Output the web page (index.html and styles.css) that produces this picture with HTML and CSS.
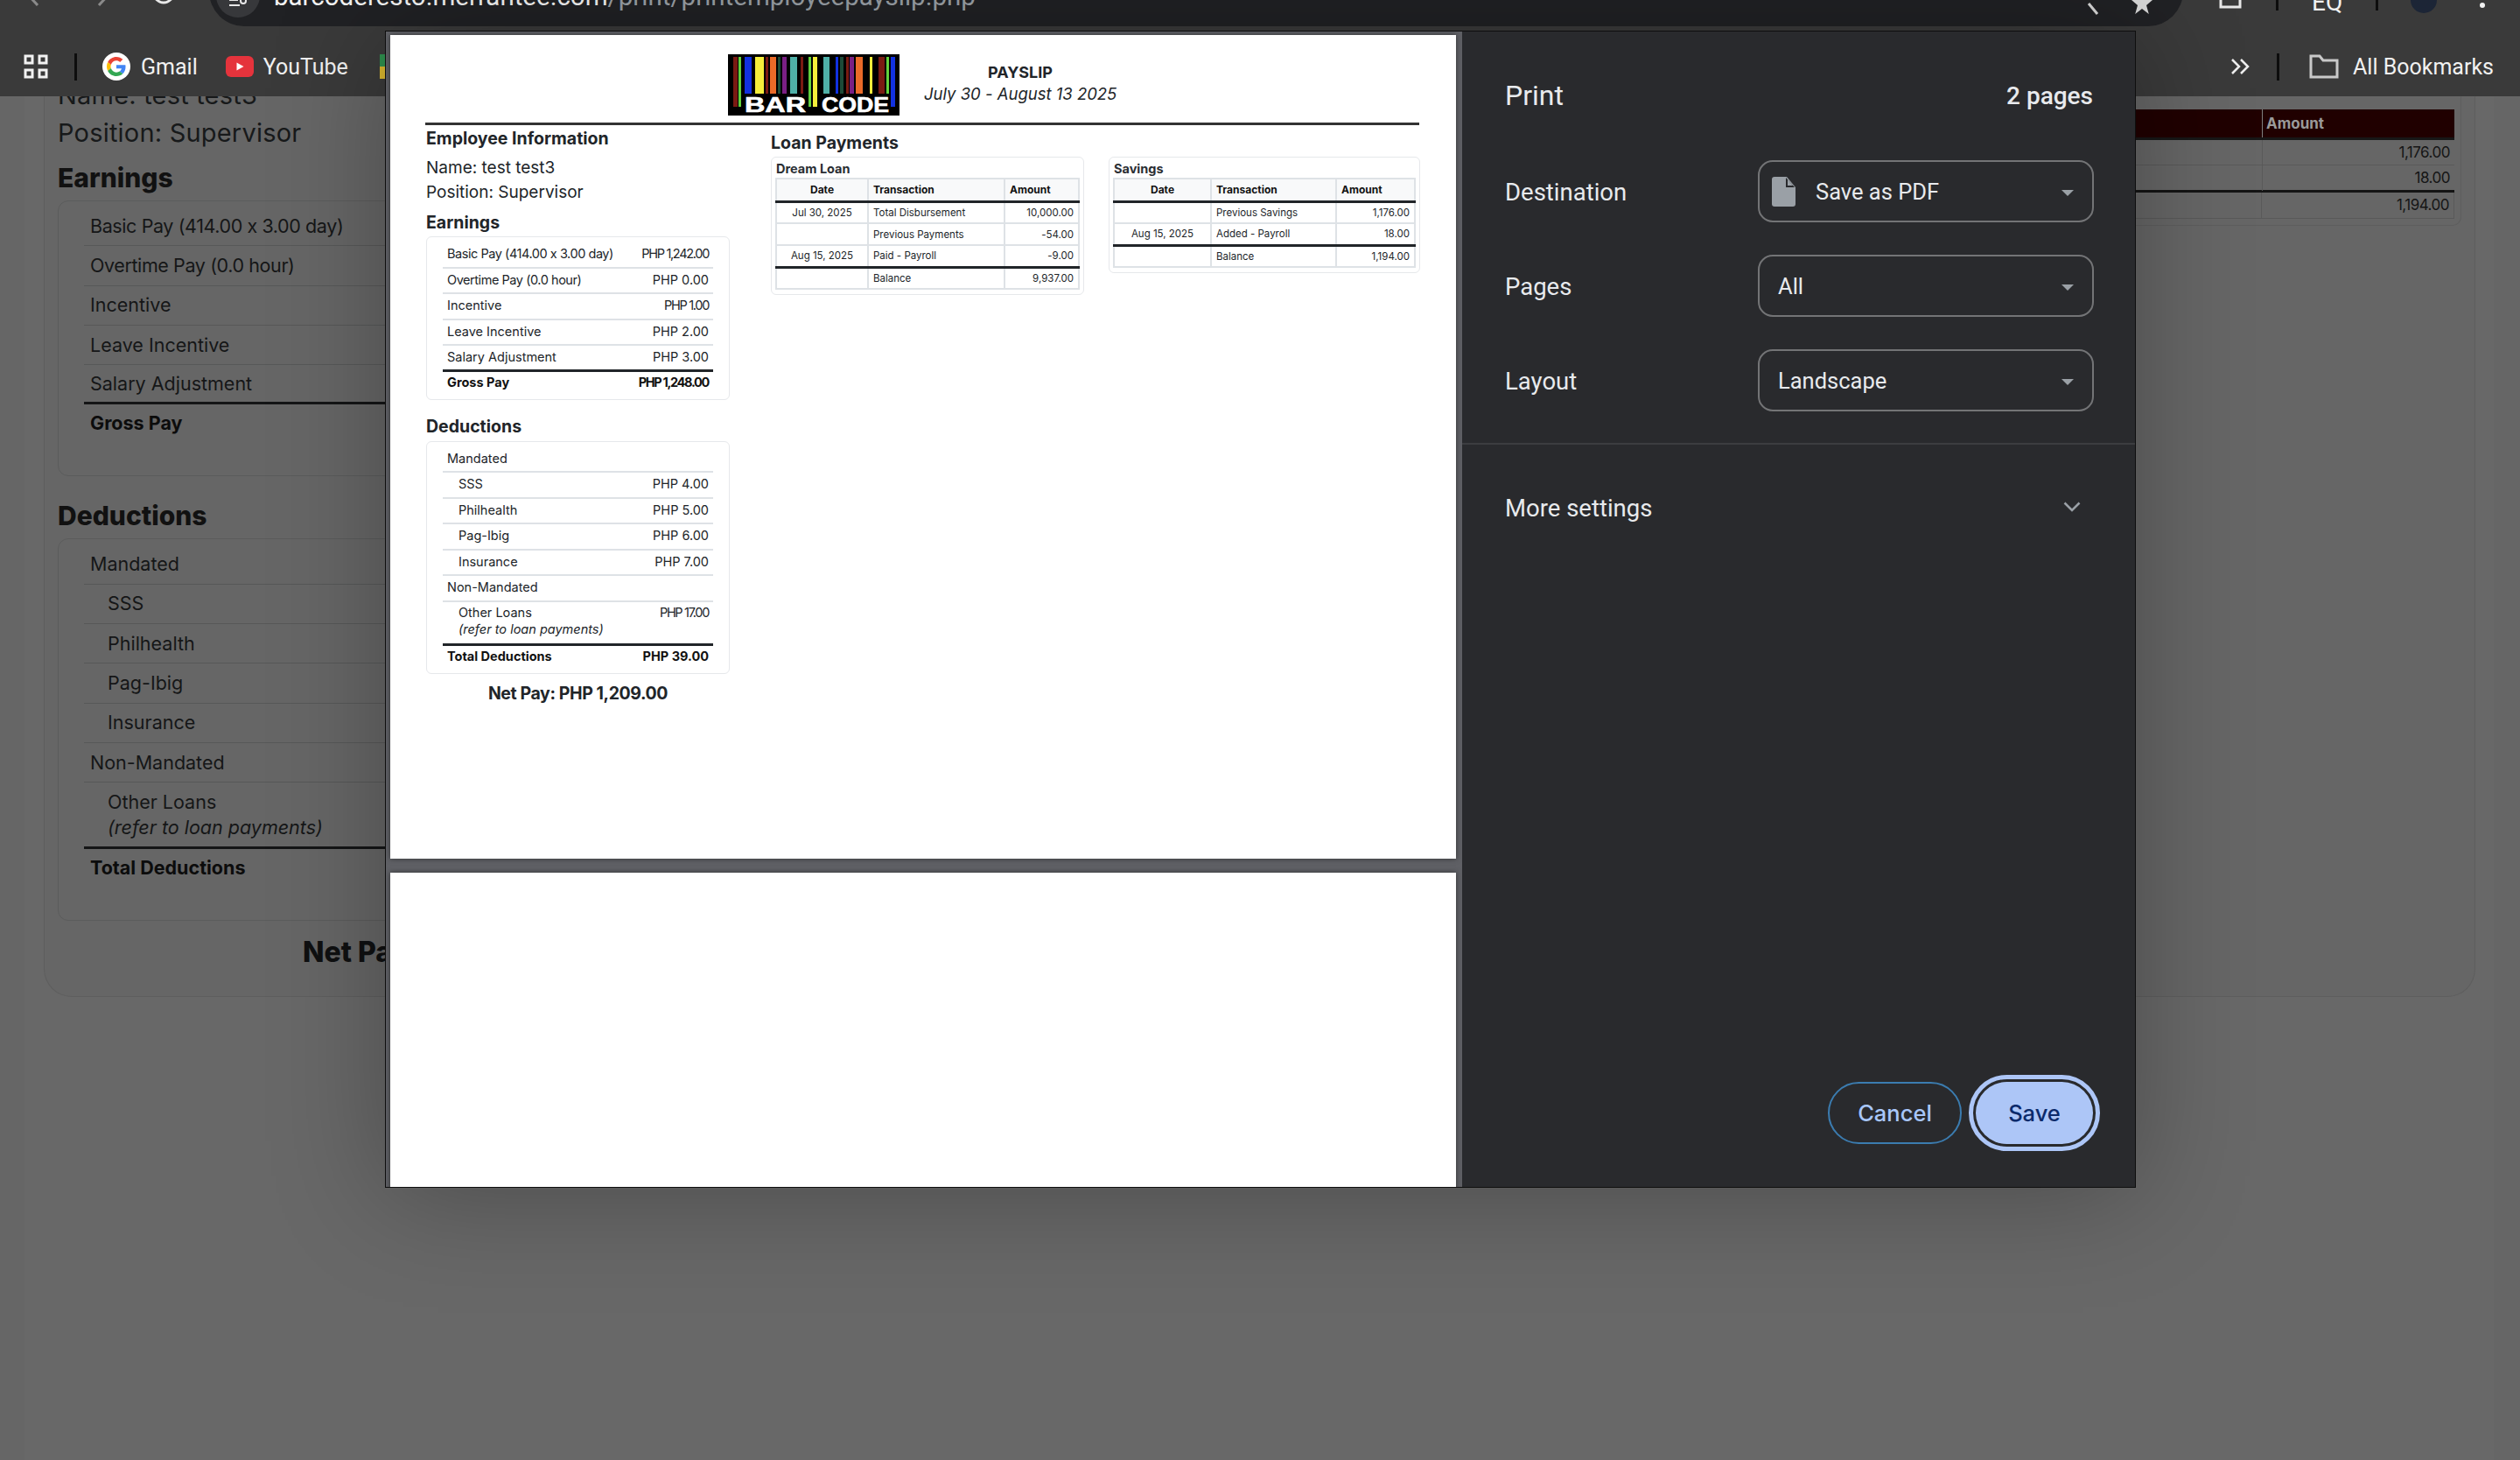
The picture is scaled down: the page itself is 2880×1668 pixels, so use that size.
FILE: index.html
```html
<!DOCTYPE html>
<html lang="en">
<head>
  <meta charset="UTF-8">
  <title>Print payslip</title>
  <link rel="stylesheet" href="styles.css">
</head>
<body>
  <header class="chrome">
    <div class="toolbar">
      <svg class="tool-icon back" width="18" height="30" viewBox="0 0 18 30"><path d="M15 2 3 15l12 13" fill="none" stroke="#8a8a8a" stroke-width="3"/></svg>
      <svg class="tool-icon forward" width="18" height="30" viewBox="0 0 18 30"><path d="M3 2l12 13L3 28" fill="none" stroke="#8a8a8a" stroke-width="3"/></svg>
      <svg class="tool-icon reload" width="30" height="30" viewBox="0 0 30 30"><circle cx="15" cy="15" r="11" fill="none" stroke="#e8e8e8" stroke-width="3"/></svg>
      <div class="omnibox">
        <span class="site-chip"><svg width="24" height="12" viewBox="0 0 24 12"><path d="M2 3h10M2 9h12" stroke="#e8e8e8" stroke-width="2"/><circle cx="18" cy="4" r="3" fill="none" stroke="#e8e8e8" stroke-width="2"/></svg></span>
        <span class="url">barcoderesto.merrantee.com<span class="url-path">/print/printemployeepayslip.php</span></span>
        <svg class="lens" width="30" height="30" viewBox="0 0 30 30"><path d="M16 16l10 12" stroke="#d8d8d8" stroke-width="3"/></svg>
        <svg class="star" width="26" height="30" viewBox="0 0 26 30"><path d="M13 2l3.500 10H25l-7 6 2.800 10L13 22l-7.800 6L8 18l-7-6h8.500z" fill="#d8d8d8"/></svg>
      </div>
      <svg class="share" width="28" height="30" viewBox="0 0 28 30"><path d="M3 0v13h22V0" fill="none" stroke="#e8e8e8" stroke-width="3"/></svg>
      <span class="tool-divider"></span>
      <span class="ext-label">EQ</span>
      <span class="tool-divider"></span>
      <span class="avatar"></span>
      <span class="menu-dot"></span>
    </div>
    <nav class="bookmarks">
      <svg class="apps" width="28" height="28" viewBox="0 0 28 28"><g fill="none" stroke="#f2f2f2" stroke-width="3"><rect x="2" y="2" width="8" height="8"/><rect x="18" y="2" width="8" height="8"/><rect x="2" y="18" width="8" height="8"/><rect x="18" y="18" width="8" height="8"/></g></svg>
      <span class="bar-divider first"></span>
      <svg class="g-logo" width="32" height="32" viewBox="0 0 32 32">
        <circle cx="16" cy="16" r="16" fill="#fff"/>
        <g transform="translate(5 5) scale(.458)">
          <path fill="#EA4335" d="M24 9.500c3.540 0 6.710 1.220 9.210 3.600l6.850-6.850C35.900 2.380 30.470 0 24 0 14.620 0 6.510 5.380 2.560 13.220l7.980 6.190C12.430 13.720 17.740 9.500 24 9.500z"/>
          <path fill="#4285F4" d="M46.980 24.550c0-1.570-.15-3.090-.38-4.550H24v9.020h12.940c-.58 2.960-2.260 5.480-4.780 7.180l7.730 6c4.510-4.180 7.090-10.360 7.090-17.650z"/>
          <path fill="#FBBC05" d="M10.530 28.590c-.48-1.450-.76-2.990-.76-4.590s.27-3.140.76-4.590l-7.980-6.190C.92 16.460 0 20.120 0 24c0 3.880.92 7.540 2.560 10.780l7.970-6.190z"/>
          <path fill="#34A853" d="M24 48c6.480 0 11.930-2.130 15.890-5.810l-7.730-6c-2.150 1.450-4.920 2.300-8.160 2.300-6.260 0-11.570-4.220-13.470-9.910l-7.980 6.190C6.510 42.620 14.620 48 24 48z"/>
        </g>
      </svg>
      <span class="bm-label gmail">Gmail</span>
      <svg class="yt-logo" width="32" height="24" viewBox="0 0 32 24"><rect width="32" height="24" rx="6" fill="#e5333c"/><path d="M12.500 7.500v9l8-4.500z" fill="#fff"/></svg>
      <span class="bm-label youtube">YouTube</span>
      <svg class="maps-logo" width="12" height="28" viewBox="0 0 12 28"><rect width="12" height="14" fill="#2f8f4e"/><rect y="14" width="12" height="14" fill="#d9b62f"/></svg>
      <svg class="more-bm" width="22" height="20" viewBox="0 0 22 20"><path d="M2 2l8 8-8 8M12 2l8 8-8 8" fill="none" stroke="#eee" stroke-width="2.500"/></svg>
      <span class="bar-divider last"></span>
      <svg class="folder" width="34" height="28" viewBox="0 0 34 28"><path d="M2 26V2h10l4 5h16v19z" fill="none" stroke="#c9c9c9" stroke-width="3"/></svg>
      <span class="bm-label all">All Bookmarks</span>
    </nav>
  </header>

  <main class="bg-page">
    <div class="bg-strip">
      <div class="bg-card">
        <section class="bg-left">
          <p class="bg-info">Name: test test3</p>
          <p class="bg-info">Position: Supervisor</p>
          <h2 class="bg-title earnings">Earnings</h2>
          <div class="bg-box">
            <div class="bg-row digits">Basic Pay (414.00 x 3.00 day)</div>
            <div class="bg-row digits">Overtime Pay (0.0 hour)</div>
            <div class="bg-row">Incentive</div>
            <div class="bg-row">Leave Incentive</div>
            <div class="bg-row before-total">Salary Adjustment</div>
            <div class="bg-row total">Gross Pay</div>
          </div>
          <h2 class="bg-title deductions">Deductions</h2>
          <div class="bg-box">
            <div class="bg-row">Mandated</div>
            <div class="bg-row sub">SSS</div>
            <div class="bg-row sub">Philhealth</div>
            <div class="bg-row sub">Pag-Ibig</div>
            <div class="bg-row sub">Insurance</div>
            <div class="bg-row">Non-Mandated</div>
            <div class="bg-row sub tall before-total">Other Loans<br><em>(refer to loan payments)</em></div>
            <div class="bg-row total">Total Deductions</div>
          </div>
          <p class="bg-net">Net Pay: PHP 1,209.00</p>
        </section>
        <section class="bg-savings">
          <div class="bg-table">
            <div class="bg-th"><span></span><span>Amount</span></div>
            <div class="bg-tr"><span></span><span>1,176.00</span></div>
            <div class="bg-tr"><span></span><span>18.00</span></div>
            <div class="bg-tr sum"><span></span><span>1,194.00</span></div>
          </div>
        </section>
      </div>
    </div>
  </main>

  <div class="print-dialog">
    <div class="preview">
      <article class="sheet">
        <div class="sheet-head">
          <svg class="logo" width="196" height="70" viewBox="0 0 196 70">
            <rect width="196" height="70" fill="#000"/>
            <g fill="#7a1a12">
              <rect x="6" y="3" width="5" height="57"/><rect x="43" y="3" width="3" height="42"/><rect x="83" y="3" width="3" height="42"/><rect x="135" y="3" width="3" height="42"/><rect x="172" y="3" width="7" height="42"/>
            </g>
            <g fill="#62d13c">
              <rect x="12" y="3" width="3" height="57"/><rect x="92" y="3" width="3" height="57"/><rect x="181" y="3" width="3" height="42"/>
            </g>
            <g fill="#1231e0">
              <rect x="19" y="3" width="8" height="42"/><rect x="123" y="3" width="3" height="42"/><rect x="186" y="3" width="5" height="57"/>
            </g>
            <g fill="#f5ee3b">
              <rect x="31" y="3" width="10" height="42"/><rect x="97" y="3" width="5" height="57"/><rect x="162" y="3" width="3" height="42"/>
            </g>
            <g fill="#ea6a28">
              <rect x="48" y="3" width="7" height="42"/><rect x="146" y="3" width="8" height="42"/>
            </g>
            <g fill="#1d4a38">
              <rect x="57" y="3" width="3" height="42"/><rect x="128" y="3" width="4" height="42"/>
            </g>
            <g fill="#7a1f84">
              <rect x="62" y="3" width="5" height="42"/><rect x="139" y="3" width="5" height="42"/>
            </g>
            <g fill="#4fb0a8">
              <rect x="71" y="3" width="8" height="42"/><rect x="109" y="3" width="7" height="42"/>
            </g>
            <text class="logo-text" x="19" y="66" textLength="70" lengthAdjust="spacingAndGlyphs">BAR</text>
            <text class="logo-text" x="107" y="66" textLength="77" lengthAdjust="spacingAndGlyphs">CODE</text>
          </svg>
          <div class="sheet-heading">
            <div class="sheet-title">PAYSLIP</div>
            <div class="sheet-dates">July 30 - August 13 2025</div>
          </div>
        </div>
        <div class="sheet-body">
          <section class="pay-col">
            <h3 class="sheet-h emp">Employee Information</h3>
            <p class="sheet-info name">Name: test test3</p>
            <p class="sheet-info">Position: Supervisor</p>
            <h3 class="sheet-h earn">Earnings</h3>
            <div class="pay-card">
              <div class="pay-row"><span class="digits">Basic Pay (414.00 x 3.00 day)</span><span class="tight">PHP 1,242.00</span></div>
              <div class="pay-row"><span class="digits">Overtime Pay (0.0 hour)</span><span>PHP 0.00</span></div>
              <div class="pay-row"><span>Incentive</span><span class="tight">PHP 1.00</span></div>
              <div class="pay-row"><span>Leave Incentive</span><span>PHP 2.00</span></div>
              <div class="pay-row last"><span>Salary Adjustment</span><span>PHP 3.00</span></div>
              <div class="pay-row total"><span>Gross Pay</span><span class="tight">PHP 1,248.00</span></div>
            </div>
            <h3 class="sheet-h ded">Deductions</h3>
            <div class="pay-card">
              <div class="pay-row"><span>Mandated</span></div>
              <div class="pay-row sub"><span>SSS</span><span>PHP 4.00</span></div>
              <div class="pay-row sub"><span>Philhealth</span><span>PHP 5.00</span></div>
              <div class="pay-row sub"><span>Pag-Ibig</span><span>PHP 6.00</span></div>
              <div class="pay-row sub"><span>Insurance</span><span>PHP 7.00</span></div>
              <div class="pay-row"><span>Non-Mandated</span></div>
              <div class="pay-row sub tall last"><span>Other Loans<br><em>(refer to loan payments)</em></span><span class="tight">PHP 17.00</span></div>
              <div class="pay-row total"><span>Total Deductions</span><span>PHP 39.00</span></div>
            </div>
            <p class="net-pay">Net Pay: PHP 1,209.00</p>
          </section>
          <section class="loan-col">
            <h3 class="sheet-h loans">Loan Payments</h3>
            <div class="loan-cards">
              <div class="loan-card dream">
                <h4 class="loan-name">Dream Loan</h4>
                <table class="loan-table">
                  <tr><th class="c-date">Date</th><th class="left">Transaction</th><th class="left">Amount</th></tr>
                  <tr class="after-head"><td class="c-date">Jul 30, 2025</td><td>Total Disbursement</td><td class="num">10,000.00</td></tr>
                  <tr><td class="c-date"></td><td>Previous Payments</td><td class="num">-54.00</td></tr>
                  <tr><td class="c-date">Aug 15, 2025</td><td>Paid - Payroll</td><td class="num">-9.00</td></tr>
                  <tr class="after-head"><td class="c-date"></td><td>Balance</td><td class="num">9,937.00</td></tr>
                </table>
              </div>
              <div class="loan-card savings">
                <h4 class="loan-name">Savings</h4>
                <table class="loan-table">
                  <tr><th class="c-date">Date</th><th class="left">Transaction</th><th class="left">Amount</th></tr>
                  <tr class="after-head"><td class="c-date"></td><td>Previous Savings</td><td class="num">1,176.00</td></tr>
                  <tr><td class="c-date">Aug 15, 2025</td><td>Added - Payroll</td><td class="num">18.00</td></tr>
                  <tr class="after-head"><td class="c-date"></td><td>Balance</td><td class="num">1,194.00</td></tr>
                </table>
              </div>
            </div>
          </section>
        </div>
      </article>
      <div class="sheet blank"></div>
    </div>
    <aside class="side">
      <div class="side-head">
        <h1 class="side-title">Print</h1>
        <span class="side-count">2 pages</span>
      </div>
      <div class="field first">
        <span class="field-label">Destination</span>
        <div class="select pdf">
          <svg class="doc-icon" width="27" height="34" viewBox="0 0 27 34"><path d="M3 0h14l10 12v19a3 3 0 0 1-3 3H3a3 3 0 0 1-3-3V3a3 3 0 0 1 3-3z" fill="#9aa0a6"/><path d="M16 1v11h10z" fill="#292a2d"/><path d="M18 3v7h6z" fill="#9aa0a6"/></svg>
          <span>Save as PDF</span>
          <i class="caret"></i>
        </div>
      </div>
      <div class="field">
        <span class="field-label">Pages</span>
        <div class="select"><span>All</span><i class="caret"></i></div>
      </div>
      <div class="field">
        <span class="field-label">Layout</span>
        <div class="select"><span>Landscape</span><i class="caret"></i></div>
      </div>
      <hr class="side-rule">
      <div class="more">
        <span class="field-label">More settings</span>
        <svg width="20" height="12" viewBox="0 0 20 12"><path d="M1.500 1.500 10 10l8.500-8.500" fill="none" stroke="#9aa0a6" stroke-width="2.500"/></svg>
      </div>
      <div class="side-actions">
        <button class="btn cancel">Cancel</button>
        <button class="btn save">Save</button>
      </div>
    </aside>
  </div>
</body>
</html>
```

FILE: styles.css
```css
* { box-sizing: border-box; }
html, body { margin: 0; height: 100%; }
body { width: 2880px; height: 1668px; overflow: hidden; background: #666; font-family: Inter, "Liberation Sans", sans-serif; font-feature-settings: "calt" 0; }
h1, h2, h3, h4, p { margin: 0; font-weight: inherit; font-size: inherit; }

/* browser chrome, cut off at the top of the capture */
.chrome { background: #3a3a3a; color: #f1f1f1; font-family: Roboto, "Liberation Sans", sans-serif; }
.toolbar { height: 30px; display: flex; align-items: flex-start; overflow: hidden; }
.tool-icon { margin-top: -22px; flex: none; }
.back { margin-left: 28px; }
.forward { margin-left: 64px; }
.reload { margin-left: 44px; margin-top: -23px; }
.omnibox { width: 2256px; height: 80px; margin: -50px 0 0 37px; flex: none; background: #202124; border-radius: 40px; display: flex; align-items: center; position: relative; }
.site-chip { width: 50px; height: 50px; margin: 10px 0 0 8px; border-radius: 50%; background: #37383b; display: flex; align-items: center; justify-content: center; padding-top: 16px; flex: none; }
.url { margin: 12px 0 0 16px; font-size: 29.500px; line-height: 34px; height: 34px; color: #f4f4f4; white-space: nowrap; }
.url-path { color: #9aa0a6; }
.lens { margin-left: auto; margin-top: 26px; }
.star { margin: 26px 34px 0 34px; }
.share { margin: -5px 0 0 40px; flex: none; }
.tool-divider { width: 3px; height: 12px; background: #0d0d0d; margin-left: 38px; flex: none; }
.ext-label { font-size: 28px; line-height: 30px; margin: -12px 0 0 38px; flex: none; }
.avatar { width: 30px; height: 30px; border-radius: 50%; background: #1c2536; margin: -15px 0 0 37px; flex: none; }
.menu-dot { width: 6px; height: 6px; border-radius: 50%; background: #f1f1f1; margin: 3px 0 0 49px; flex: none; }

.bookmarks { height: 80px; display: flex; align-items: center; padding-top: 12px; }
.apps { margin-left: 27px; flex: none; }
.bar-divider { width: 3px; height: 31px; background: #0d0d0d; flex: none; }
.bar-divider.first { margin-left: 30px; }
.g-logo { margin-left: 29px; flex: none; }
.bm-label { font-size: 25px; white-space: nowrap; }
.gmail { margin-left: 12px; }
.yt-logo { margin-left: 32px; flex: none; }
.youtube { margin-left: 11px; }
.maps-logo { margin-left: 36px; flex: none; }
.more-bm { margin-left: auto; flex: none; }
.bar-divider.last { margin-left: 31px; }
.folder { margin-left: 34px; flex: none; }
.all { margin: 0 30px 0 16px; }

/* dimmed payslip page behind the dialog */
.bg-page { height: 1558px; overflow: hidden; padding: 0 30px 0 28px; color: #17191a; }
.bg-strip { background: #686868; height: 100%; padding: 0 21px 0 22px; }
.bg-card { height: 1029px; display: flex; justify-content: space-between; border: 1px solid #5e5e5e; border-top: 0; border-radius: 0 0 32px 32px; padding: 0 15px; background: #666; }
.bg-left { width: 864px; }
.bg-info { font-size: 29px; line-height: 43px; letter-spacing: .2px; }
.bg-info:first-child { margin-top: -23px; }
.bg-title { font-size: 30px; line-height: 40px; font-weight: 800; color: #111; }
.bg-title.earnings { margin-top: 10px; margin-bottom: 6px; }
.bg-title.deductions { margin-top: 25px; margin-bottom: 6px; }
.bg-box { border: 1px solid #5b5c5c; border-radius: 12px; padding: 6px 0 38px 29px; }
.bg-row { height: 45.300px; display: flex; flex-direction: column; justify-content: center; padding-left: 7px; font-size: 21.500px; line-height: 29px; border-bottom: 1px solid #575858; color: #151617; }
.bg-row.digits { letter-spacing: -.4px; }
.bg-row.sub { padding-left: 27px; }
.bg-row.tall { height: 76px; }
.bg-row.before-total { border-bottom: 3px solid #141516; }
.bg-row.total { border-bottom: 0; height: 43px; font-weight: 700; color: #0c0c0c; }
.bg-net { font-size: 32px; line-height: 44px; font-weight: 800; margin-top: 14px; padding-left: 280px; color: #0f1011; white-space: nowrap; }
.bg-savings { width: 500px; height: 148px; border: 1px solid #5e5e5e; border-top: 0; border-radius: 0 0 10px 10px; padding: 15px 7px 8px 0; }
.bg-th, .bg-tr { display: grid; grid-template-columns: 1fr 219px; }
.bg-th { height: 35px; background: #200000; border-bottom: 3px solid #171717; color: #9a9a9a; font-size: 17px; font-weight: 700; line-height: 32px; }
.bg-th span:first-child { border-right: 1px solid #808080; }
.bg-th span:last-child { padding-left: 4px; }
.bg-tr { height: 29px; font-size: 17px; line-height: 29px; letter-spacing: -.5px; border-bottom: 1px solid #595959; text-align: right; color: #151515; }
.bg-tr span:first-child { border-right: 1px solid #595959; }
.bg-tr span:last-child { padding-right: 5px; }
.bg-tr:nth-child(3) { border-bottom: 3px solid #141414; height: 31px; }
.bg-tr.sum { height: 30px; border-right: 1px solid #595959; }

/* print dialog */
.print-dialog { position: absolute; left: 440px; top: 35px; width: 2001px; height: 1322px; border: 1px solid #0e0e0e; display: flex; background: #5f6065; box-shadow: 0 6px 120px rgba(0, 0, 0, .28); overflow: hidden; }
.preview { width: 1230px; flex: none; padding: 4px 0 0 5px; display: flex; flex-direction: column; gap: 16px; background: #5f6065; }
.sheet { width: 1218px; height: 941px; background: #fff; padding: 22px 42px 0 40px; color: #212529; font-family: Inter, "Liberation Sans", sans-serif; flex: none; box-shadow: 0 0 6px rgba(0, 0, 0, .5); }
.sheet.blank { height: 400px; }
.sheet-head { height: 81px; border-bottom: 3px solid #333; display: flex; justify-content: center; padding: 0 0 8px 0; }
.logo { flex: none; margin-left: 0; }
.logo-text { font: 700 23px "Liberation Sans", sans-serif; fill: #fff; stroke: #fff; stroke-width: .6px; }
.sheet-heading { width: 248px; padding-left: 28px; text-align: center; flex: none; }
.sheet-title { font-size: 18px; line-height: 24px; font-weight: 700; margin-top: 9px; }
.sheet-dates { font-size: 18.500px; line-height: 24px; font-style: italic; white-space: nowrap; }
.sheet-body { display: flex; gap: 47px; align-items: flex-start; padding-left: 1px; }
.sheet-h { font-size: 19.500px; line-height: 28px; font-weight: 700; }
.sheet-h.emp { margin-top: 1px; }
.sheet-h.earn { margin-top: 6px; margin-bottom: 2px; }
.sheet-h.ded { margin-top: 16px; margin-bottom: 3px; }
.sheet-h.loans { margin-top: 6px; margin-bottom: 2px; }
.sheet-info { font-size: 19px; line-height: 28px; }
.sheet-info.name { margin-top: 6px; }
.pay-col { width: 347px; flex: none; }
.pay-card { border: 1.500px solid #e6e8eb; border-radius: 6px; padding: 6px 18px 7px; }
.pay-row { height: 29.500px; padding: 0 5px 2px; display: flex; justify-content: space-between; align-items: center; font-size: 14.500px; line-height: 19px; border-bottom: 2px solid #dee2e6; color: #212529; }
.pay-row .digits { letter-spacing: -.45px; }
.pay-row .tight { letter-spacing: -1.300px; }
.pay-row.sub > span:first-child { padding-left: 13px; }
.pay-row.tall { height: 50px; align-items: flex-start; padding-top: 2px; }
.pay-row.last { border-bottom: 3px solid #212529; }
.pay-row.total { height: 24px; border-bottom: 0; padding-bottom: 0; font-weight: 700; color: #111; }
.net-pay { margin-top: 8px; font-size: 19.500px; line-height: 28px; font-weight: 700; text-align: center; letter-spacing: -.4px; }
.loan-col { flex: 1; }
.loan-cards { display: flex; gap: 28px; align-items: flex-start; }
.loan-card { border: 1.500px solid #e6e8eb; border-radius: 6px; padding: 3px 4px 5px; }
.loan-card.dream { width: 358px; }
.loan-card.savings { width: 356px; }
.loan-name { font-size: 14.500px; line-height: 20px; font-weight: 700; padding-left: 1px; color: #2a2e33; }
.loan-table { width: 100%; border-collapse: collapse; font-size: 11.500px; table-layout: fixed; }
.loan-table th, .loan-table td { border: 2px solid #dee2e6; height: 25px; padding: 0 5px; color: #212529; }
.loan-table th { height: 26px; background: #f8f9fa; font-size: 12px; font-weight: 700; color: #111; border-bottom: 3px solid #212529; }
.loan-table th.left { text-align: left; }
.loan-table .c-date { width: 105px; text-align: center; }
.loan-table .num { text-align: right; }
.loan-table tr.after-head td { border-top: 3px solid #212529; }
.dream .loan-table th:last-child { width: 85px; }
.savings .loan-table th:nth-child(1) { width: 111px; }
.savings .loan-table th:last-child { width: 90px; }

/* print sidebar */
.side { flex: 1; background: #292a2d; padding: 0; display: flex; flex-direction: column; color: #e8eaed; font-family: Roboto, "Liberation Sans", sans-serif; font-size: 28px; }
.side-head { display: flex; justify-content: space-between; align-items: center; height: 146px; padding: 0 48px 0 49px; }
.side-title { font-size: 32px; }
.side-count { font-weight: 500; }
.field { display: grid; grid-template-columns: 289px 384px; align-items: center; padding-left: 49px; height: 71px; margin-top: 37px; }
.field.first { margin-top: 1px; }
.field-label { font-size: 27.500px; padding-top: 2px; }
.select { height: 71px; border: 2px solid #737476; border-radius: 17px; display: flex; align-items: center; padding: 0 21px; position: relative; font-size: 25.500px; }
.select.pdf { padding-left: 14px; gap: 23px; }
.caret { position: absolute; right: 21px; top: 32px; width: 0; height: 0; border: 7px solid transparent; border-top: 7px solid #9aa0a6; border-bottom: 0; }
.side-rule { margin: 36px 0 0; border: 0; border-top: 2px solid #3c3d40; }
.more { display: flex; justify-content: space-between; align-items: center; height: 142px; padding: 0 62px 0 49px; }
.side-actions { margin-top: auto; display: flex; justify-content: flex-end; gap: 16px; padding: 0 48px 49px 0; }
.btn { height: 71px; border-radius: 36px; font: 500 25.500px Inter, Roboto, "Liberation Sans", sans-serif; flex: none; }
.cancel { width: 153px; background: transparent; border: 2px solid #3b7cb0; color: #a8c7fa; }
.save { width: 134px; background: #adc6f7; border: 0; color: #0b2a6b; outline: 5px solid #adc6f7; outline-offset: 3px; }
```
